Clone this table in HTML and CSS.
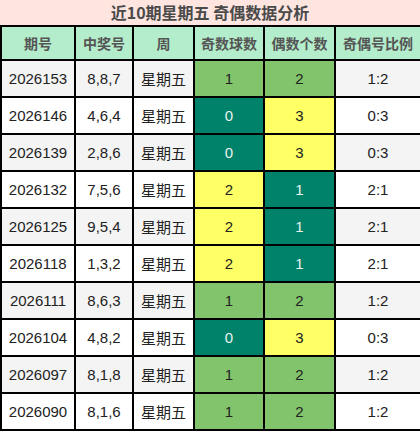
FILE: index.html
```html
<!DOCTYPE html>
<html lang="zh">
<head>
    <meta charset="UTF-8">
    <meta name="viewport" content="width=device-width, initial-scale=1.0">
    <title>奇偶数据分析</title>
    <link rel="stylesheet" href="styles.css">
</head>
<body>
    <div class="title">近10期星期五 奇偶数据分析</div>

    <table class="data-table">
        <colgroup>
            <col class="c-issue">
            <col class="c-num">
            <col class="c-week">
            <col class="c-odd">
            <col class="c-even">
            <col class="c-ratio">
        </colgroup>
        <thead>
            <tr>
                <th>期号</th>
                <th>中奖号</th>
                <th>周</th>
                <th>奇数球数</th>
                <th>偶数个数</th>
                <th>奇偶号比例</th>
            </tr>
        </thead>
        <tbody>
            <tr class="row-grey">
                <td>2026153</td><td>8,8,7</td><td class="cjk">星期五</td>
                <td class="green">1</td><td class="green">2</td><td>1:2</td>
            </tr>
            <tr>
                <td>2026146</td><td>4,6,4</td><td class="cjk">星期五</td>
                <td class="teal">0</td><td class="yellow">3</td><td>0:3</td>
            </tr>
            <tr class="row-grey">
                <td>2026139</td><td>2,8,6</td><td class="cjk">星期五</td>
                <td class="teal">0</td><td class="yellow">3</td><td>0:3</td>
            </tr>
            <tr>
                <td>2026132</td><td>7,5,6</td><td class="cjk">星期五</td>
                <td class="yellow">2</td><td class="teal">1</td><td>2:1</td>
            </tr>
            <tr class="row-grey">
                <td>2026125</td><td>9,5,4</td><td class="cjk">星期五</td>
                <td class="yellow">2</td><td class="teal">1</td><td>2:1</td>
            </tr>
            <tr>
                <td>2026118</td><td>1,3,2</td><td class="cjk">星期五</td>
                <td class="yellow">2</td><td class="teal">1</td><td>2:1</td>
            </tr>
            <tr class="row-grey">
                <td>2026111</td><td>8,6,3</td><td class="cjk">星期五</td>
                <td class="green">1</td><td class="green">2</td><td>1:2</td>
            </tr>
            <tr>
                <td>2026104</td><td>4,8,2</td><td class="cjk">星期五</td>
                <td class="teal">0</td><td class="yellow">3</td><td>0:3</td>
            </tr>
            <tr class="row-grey">
                <td>2026097</td><td>8,1,8</td><td class="cjk">星期五</td>
                <td class="green">1</td><td class="green">2</td><td>1:2</td>
            </tr>
            <tr>
                <td>2026090</td><td>8,1,6</td><td class="cjk">星期五</td>
                <td class="green">1</td><td class="green">2</td><td>1:2</td>
            </tr>
        </tbody>
    </table>
</body>
</html>
```

FILE: styles.css
```css
body {
    margin: 0;
    padding: 0;
    background: #fff;
    font-family: "Liberation Sans", "Noto Sans CJK SC", sans-serif;
    color: #222;
}

.title {
    height: 25px;
    line-height: 25px;
    background-color: #fee5df;
    color: #4a4a4a;
    font-family: "Noto Sans CJK SC", sans-serif;
    font-weight: bold;
    font-size: 16px;
    text-align: center;
}

.data-table {
    width: 420px;
    border-collapse: collapse;
    table-layout: fixed;
    border: 2px solid #000;
}

.c-issue { width: 74px; }
.c-num { width: 58px; }
.c-week { width: 61px; }
.c-odd { width: 70px; }
.c-even { width: 71px; }
.c-ratio { width: 86px; }

.data-table th,
.data-table td {
    border: 2px solid #000;
    padding: 0;
    text-align: center;
    white-space: nowrap;
}

.data-table th {
    height: 32px;
    background-color: #b3edcb;
    color: #555;
    font-family: "Noto Sans CJK SC", sans-serif;
    font-size: 14px;
    font-weight: bold;
}

.data-table td {
    height: 35px;
    font-size: 15px;
    background-color: #fff;
}

.row-grey td {
    background-color: #f4f4f4;
}

.data-table td.cjk {
    font-family: "Noto Sans CJK SC", sans-serif;
    font-size: 15px;
}

.data-table td.green {
    background-color: #82c46b;
}

.data-table td.teal {
    background-color: #00816a;
    color: #e8f4f0;
}

.data-table td.yellow {
    background-color: #ffff66;
}
```
